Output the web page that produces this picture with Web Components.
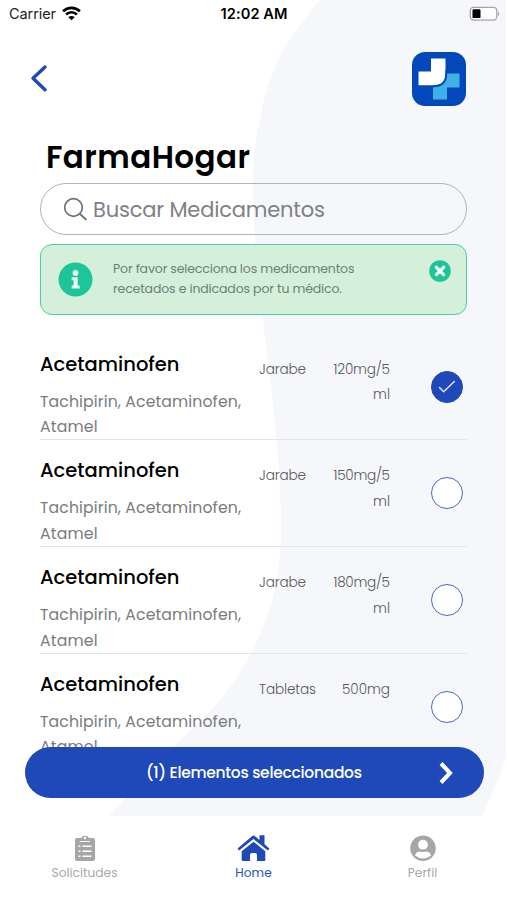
<!DOCTYPE html>
<html lang="es">
<head>
<meta charset="utf-8">
<title>FarmaHogar</title>
<style>
html, body { margin: 0; height: 100%; overflow: hidden; background: #fff; }
body { font-family: Poppins, Inter, "Open Sans", sans-serif; color: #000; }
</style>
</head>
<body>
<farma-app></farma-app>
<script>
const define = (name, html, setup) => {
  const tpl = document.createElement('template');
  tpl.innerHTML = html;
  customElements.define(name, class extends HTMLElement {
    connectedCallback() {
      if (this.shadowRoot) return;
      const root = this.attachShadow({ mode: 'open' });
      root.append(tpl.content.cloneNode(true));
      if (setup) setup(this, root);
    }
  });
};

/* One line of text, tracked to span the width given in "w" */
define('fit-line', `
<style>
:host { display: block; white-space: nowrap; }
span { display: inline-block; }
</style><span></span>`, (host, root) => {
  const span = root.querySelector('span');
  span.textContent = host.getAttribute('text');
  const w = +host.getAttribute('w');
  host.style.width = w + 'px';
  const natural = span.getBoundingClientRect().width;
  span.style.letterSpacing = ((w - natural) / (span.textContent.length - 1)) + 'px';
});

define('status-bar', `
<style>
:host { display: grid; grid-template-columns: 1fr auto 1fr; align-items: center; height: 28px; box-sizing: border-box; padding: 0 7px 1px 9px; font-family: Inter, sans-serif; }
.left { display: flex; align-items: center; gap: 6px; font-size: 14.5px; color: #222; }
.time { font-size: 14.600px; font-weight: 600; margin-right: 1px; }
.right { display: flex; justify-content: flex-end; }
svg { display: block; }
</style>
<div class="left"><fit-line w="47" text="Carrier"></fit-line>
<svg width="19" height="15" viewBox="0 0 19 15" fill="none" stroke="#000" stroke-width="2.6"><path d="M1.1 5.3a12 12 0 0 1 16.8 0M4.1 8.5a7.7 7.7 0 0 1 10.8 0"/><path d="M9.500 14.300L6.300 11.200a4.600 4.600 0 0 1 6.400 0z" fill="#000" stroke="none"/></svg></div>
<div class="time"><fit-line w="67" text="12:02 AM"></fit-line></div>
<div class="right"><svg width="31" height="16" viewBox="0 0 31 16"><rect x="1.300" y="1.300" width="26.500" height="12.800" rx="3.500" fill="#fff" stroke="#a5a5a8" stroke-width="1.300"/><rect x="3.500" y="3.300" width="8" height="8.800" rx="1.200"/><path d="M29 5.500q2.200 2.200 0 4.500z" fill="#a5a5a8"/></svg></div>
`);

define('app-header', `
<style>
:host { display: flex; justify-content: space-between; align-items: center; height: 54px; padding: 23.500px 41px 0 29.500px; }
svg { display: block; }
.back { margin-top: -1px; }
</style>
<svg class="back" width="20" height="30" viewBox="0 0 20 30" fill="none" stroke="#1f48b8" stroke-width="3.400" stroke-linecap="round" stroke-linejoin="round"><path d="M15 4L3 15.300L15 26.800"/></svg>
<svg width="54" height="54" viewBox="0 0 54 54"><rect width="54" height="54" rx="13" fill="#0348bb"/><path d="M34.500 21.500H47.500V35.500H35V47.500H21V35.500Q34.500 34.500 34.500 21.500Z" fill="#3fb1e5"/><path d="M19 6.500H33.500V21Q33.500 33.300 22 33.300H6.500V19.500H19Z" fill="#fff"/><path d="M34.300 18V21.500Q34.300 34.200 21.500 34.200" fill="none" stroke="#0348bb" stroke-width="1.800"/></svg>
`);

define('search-field', `
<style>
:host { display: flex; box-sizing: border-box; align-items: center; gap: 5px; height: 52.500px; padding: 1px 0 0 22px; border: 1px solid #b3b4b7; border-radius: 27px; color: #808084; font-size: 21px; }
</style>
<svg width="25" height="25" viewBox="0 0 25 25" fill="none" stroke="#707074" stroke-width="1.700" stroke-linecap="round"><circle cx="10.500" cy="10.500" r="8.800"/><path d="M17 17L23 22.500"/></svg>
<fit-line w="232" text="Buscar Medicamentos"></fit-line>
`);

define('info-alert', `
<style>
:host { display: flex; box-sizing: border-box; height: 71px; margin-top: 8.500px; padding: 0 15px 0 17px; border: 1.500px solid #4fcba5; border-radius: 12px; background: #d5f0da; color: #6c7f74; font-size: 12.500px; line-height: 19.500px; }
.i { margin-top: 17px; } .t { flex: 1; margin: 14.700px 0 0 20px; } .x { margin-top: 15px; }
svg { display: block; }
</style>
<svg class="i" width="35" height="35" viewBox="0 0 35 35"><circle cx="17.500" cy="17.500" r="17" fill="#1ec49a"/><g fill="#e9faf0"><circle cx="17.500" cy="11" r="2.900"/><path d="M13.700 15.200H19.700V23.500H21.700V26.500H13.700V23.500H15.600V18.200H13.700Z"/></g></svg>
<div class="t"><fit-line w="241.500" text="Por favor selecciona los medicamentos"></fit-line><fit-line w="229" text="recetados e indicados por tu médico."></fit-line></div>
<svg class="x" width="22" height="22" viewBox="0 0 22 22"><circle cx="11" cy="11" r="10.800" fill="#1ec49a"/><path d="M7.400 7.400L14.600 14.600M14.600 7.400L7.400 14.600" stroke="#e9faf0" stroke-width="3.400" stroke-linecap="round"/></svg>
`);

define('med-item', `
<style>
:host { display: grid; box-sizing: border-box; grid-template-columns: 219px 57px 74px 1fr; height: 106.700px; border-bottom: 1px solid #e3e5ea; }
.name { font-size: 19.500px; font-weight: 500; line-height: 30px; padding-top: 16px; }
.alt { margin-top: 9px; font-size: 15.700px; line-height: 25.700px; color: #7b7b7e; }
.kind, .dose { padding-top: 23px; font-size: 13.600px; font-weight: 300; line-height: 25.700px; color: #58585c; }
.dose { display: flex; flex-direction: column; align-items: flex-end; }
.pick { box-sizing: border-box; justify-self: end; width: 32px; height: 32px; margin: 37px 3.500px 0 0; border: 1.500px solid #4b69c5; border-radius: 50%; background: #fff; }
.pick svg { display: none; }
:host([checked]) .pick { background: #1f48b8; border-color: #1f48b8; }
:host([checked]) svg { display: block; }
</style>
<div><div class="name"><fit-line w="139.500" text="Acetaminofen"></fit-line></div>
<div class="alt"><fit-line w="201" text="Tachipirin, Acetaminofen,"></fit-line><fit-line w="57.500" text="Atamel"></fit-line></div></div>
<div class="kind"></div><div class="dose"></div>
<div class="pick"><svg width="29" height="29" viewBox="0 0 29 29" fill="none" stroke="#dbe5ff" stroke-width="1.500" stroke-linecap="round" stroke-linejoin="round"><path d="M7.500 15.500L11.700 19.700L22.300 9.500"/></svg></div>
`, (host, root) => {
  const line = (text, w) => {
    const el = document.createElement('fit-line');
    el.setAttribute('text', text);
    el.setAttribute('w', w);
    return el;
  };
  const kind = host.getAttribute('kind');
  root.querySelector('.kind').append(line(kind, kind === 'Jarabe' ? 47 : 57));
  const dose = host.getAttribute('dose');
  root.querySelector('.dose').append(line(dose, dose === '500mg' ? 48 : 56.5));
  if (host.hasAttribute('unit')) root.querySelector('.dose').append(line(host.getAttribute('unit'), 17));
});

define('selection-bar', `
<style>
:host { display: grid; box-sizing: border-box; grid-template-columns: 1fr auto 1fr; align-items: center; height: 51px; padding: 0 30px; border-radius: 26px; background: #1f48b8; color: #fff; font-size: 15.500px; font-weight: 500; }
svg { justify-self: end; }
</style>
<i></i><fit-line w="216" text="(1) Elementos seleccionados"></fit-line>
<svg width="17" height="24" viewBox="0 0 17 24" fill="none" stroke="#fff" stroke-width="4" stroke-linejoin="miter"><path d="M4 2.500L13 12L4 21.500"/></svg>
`);

define('nav-item', `
<style>
:host { display: flex; flex-direction: column; align-items: center; color: #a8a8aa; font-size: 12.200px; line-height: 18px; }
:host([active]) { color: #2a52bc; }
.box { height: 28px; margin: 19px 0 1px; }
</style><div class="box"><slot></slot></div><slot name="label"></slot>`);

define('tab-bar', `
<style>
:host { display: grid; grid-template-columns: repeat(3, 1fr); height: 84px; background: #fff; }
svg { display: block; }
</style>
<nav-item><svg width="20" height="27" viewBox="0 0 20 27"><path fill="#a6a6a6" fill-rule="evenodd" d="M2 3H6.200a4 3.200 0 0 1 7.600 0H18a2 2 0 0 1 2 2V24a2 2 0 0 1-2 2H2a2 2 0 0 1-2-2V5a2 2 0 0 1 2-2ZM8.800 3a1.200 1.200 0 1 0 2.400 0a1.200 1.200 0 1 0-2.400 0Z"/><path d="M5 6.500H15" stroke="#f8f8f8" stroke-width="1"/><path d="M3.500 11.300H5.500M7.500 11.300H16.500M3.500 16.300H5.500M7.500 16.300H16.500M3.500 21.300H5.500M7.500 21.300H16.500" stroke="#fff" stroke-width="1.600"/></svg><fit-line slot="label" w="66" text="Solicitudes"></fit-line></nav-item>
<nav-item active><svg width="33" height="27" viewBox="0 0 33 27" fill="#1f48b8"><path d="M16.500 6.700L28.300 16.300V25a1 1 0 0 1-1 1H20V20a2 2 0 0 0-2-2H15a2 2 0 0 0-2 2V26H5.700a1 1 0 0 1-1-1V16.300Z"/><path d="M.6 13.500L15 1.200Q16.500 0 18 1.200L22.500 5V.800Q22.500.300 23 .300H27Q27.500.300 27.500.800V9.200L32.400 13.500L30.900 15.500L16.500 4L2.100 15.500Z"/></svg><fit-line slot="label" w="36.500" text="Home"></fit-line></nav-item>
<nav-item><svg width="26" height="27" viewBox="0 0 26 27"><circle cx="13" cy="13.200" r="12.700" fill="#a6a6a6"/><circle cx="13" cy="9.700" r="4.900" fill="#fff"/><path d="M5 20.500Q6 16.500 10 16.500Q13 17.700 16 16.500Q20 16.500 21 20.500Q13 26.500 5 20.500Z" fill="#fff"/></svg><fit-line slot="label" w="29.500" text="Perfil"></fit-line></nav-item>
`);

define('farma-app', `
<style>
:host { display: flex; flex-direction: column; position: relative; isolation: isolate; width: 507px; height: 900px; overflow: hidden; }
.bg { position: absolute; inset: 0; z-index: -1; }
h1 { margin: 0; padding: 32.500px 0 0 46px; height: 44.500px; font-size: 31px; font-weight: 600; line-height: 38px; }
main { display: flex; flex-direction: column; flex: 1; min-height: 0; padding: 0 40.500px 0 40px; }
.list { flex: 1; min-height: 0; margin-top: 19.100px; overflow: hidden; }
selection-bar { position: absolute; left: 24.500px; right: 23.500px; top: 747px; }
</style>
<svg class="bg" width="507" height="900" viewBox="0 0 507 900"><path fill="#f5f7fb" d="M320 0C302 22 292 36 285 47C275 65 266 88 262 110C255 135 253 160 253 185C253 245 261 300 267 355C276 425 281 478 281 528C281 570 273 604 263 627C252 655 237 680 215 706C198 725 185 735 178 742C155 766 132 792 109 816H482L500 775Q504 765 506 752V0Z"/></svg>
<status-bar></status-bar>
<app-header></app-header>
<h1><fit-line w="204" text="FarmaHogar"></fit-line></h1>
<main>
<search-field></search-field>
<info-alert></info-alert>
<div class="list">
<med-item kind="Jarabe" dose="120mg/5" unit="ml" checked></med-item>
<med-item kind="Jarabe" dose="150mg/5" unit="ml"></med-item>
<med-item kind="Jarabe" dose="180mg/5" unit="ml"></med-item>
<med-item kind="Tabletas" dose="500mg"></med-item>
</div>
</main>
<selection-bar></selection-bar>
<tab-bar></tab-bar>
`);
</script>
</body>
</html>
